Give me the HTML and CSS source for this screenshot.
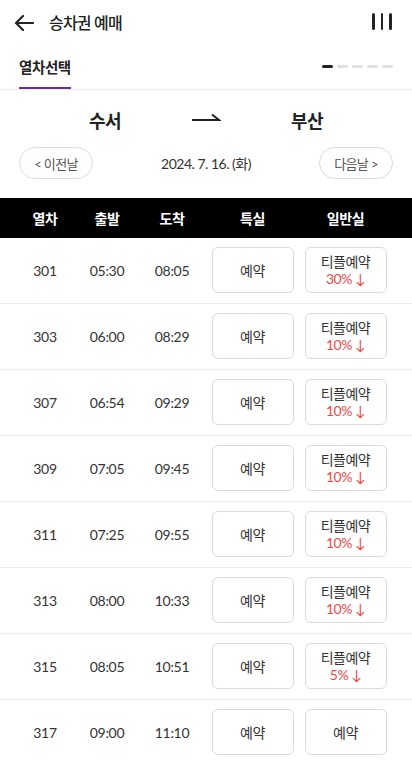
FILE: index.html
```html
<!DOCTYPE html>
<html lang="ko">
<head>
<meta charset="utf-8">
<title>승차권 예매</title>
<link rel="stylesheet" href="styles.css">
</head>
<body>
<header class="topbar">
  <svg class="back" width="20" height="18" viewBox="0 0 20 18" aria-hidden="true">
    <path d="M19 9H2.5M9 2L2 9l7 7" fill="none" stroke="#222" stroke-width="2.2" stroke-linecap="round" stroke-linejoin="round"/>
  </svg>
  <h1 class="title">승차권 예매</h1>
  <div class="menu" aria-hidden="true"><span></span><span></span><span></span></div>
</header>

<nav class="tabs">
  <div class="tab">열차선택</div>
  <div class="steps"><span class="on"></span><span></span><span></span><span></span><span></span></div>
</nav>

<section class="route">
  <div class="station">수서</div>
  <div class="route-arrow">
    <svg width="30" height="10" viewBox="0 0 30 10" aria-hidden="true">
      <path d="M1 8H28L21 2.5" fill="none" stroke="#222" stroke-width="2" stroke-linejoin="miter"/>
    </svg>
  </div>
  <div class="station">부산</div>
</section>

<section class="dates">
  <button class="pill">&lt; 이전날</button>
  <div class="date">2024. 7. 16. (화)</div>
  <button class="pill">다음날 &gt;</button>
</section>

<section class="table">
  <div class="row head">
    <div>열차</div><div>출발</div><div>도착</div><div>특실</div><div>일반실</div>
  </div>
  <div class="row">
    <div>301</div><div>05:30</div><div>08:05</div>
    <div><button class="btn">예약</button></div>
    <div><button class="btn two">티플예약<span class="sale">30% ↓</span></button></div>
  </div>
  <div class="row">
    <div>303</div><div>06:00</div><div>08:29</div>
    <div><button class="btn">예약</button></div>
    <div><button class="btn two">티플예약<span class="sale">10% ↓</span></button></div>
  </div>
  <div class="row">
    <div>307</div><div>06:54</div><div>09:29</div>
    <div><button class="btn">예약</button></div>
    <div><button class="btn two">티플예약<span class="sale">10% ↓</span></button></div>
  </div>
  <div class="row">
    <div>309</div><div>07:05</div><div>09:45</div>
    <div><button class="btn">예약</button></div>
    <div><button class="btn two">티플예약<span class="sale">10% ↓</span></button></div>
  </div>
  <div class="row">
    <div>311</div><div>07:25</div><div>09:55</div>
    <div><button class="btn">예약</button></div>
    <div><button class="btn two">티플예약<span class="sale">10% ↓</span></button></div>
  </div>
  <div class="row">
    <div>313</div><div>08:00</div><div>10:33</div>
    <div><button class="btn">예약</button></div>
    <div><button class="btn two">티플예약<span class="sale">10% ↓</span></button></div>
  </div>
  <div class="row">
    <div>315</div><div>08:05</div><div>10:51</div>
    <div><button class="btn">예약</button></div>
    <div><button class="btn two">티플예약<span class="sale">5% ↓</span></button></div>
  </div>
  <div class="row">
    <div>317</div><div>09:00</div><div>11:10</div>
    <div><button class="btn">예약</button></div>
    <div><button class="btn">예약</button></div>
  </div>
</section>
</body>
</html>
```

FILE: styles.css
```css
* { box-sizing: border-box; }
html, body { margin: 0; padding: 0; background: #fff; }
body {
  font-family: Lato, "Noto Sans CJK KR", sans-serif;
  color: #222;
  width: 412px;
}

.topbar {
  height: 44px;
  display: flex;
  align-items: center;
  padding: 0 20px 0 14px;
}
.back { display: block; margin-top: 1px; }
.title {
  margin: 0 0 0 15px;
  font-size: 16px;
  font-weight: 500;
  letter-spacing: -0.8px;
  color: #222;
  flex: 1;
}
.menu { display: flex; gap: 6px; margin-top: -2px; }
.menu span {
  width: 2.6px;
  height: 17px;
  background: #222;
  border-radius: 2px;
}

.tabs {
  height: 46px;
  display: flex;
  align-items: flex-end;
  justify-content: space-between;
  padding: 0 19px;
  border-bottom: 1px solid #ececec;
}
.tab {
  height: 45px;
  padding-top: 2px;
  display: flex;
  align-items: center;
  font-size: 14.5px;
  font-weight: 700;
  letter-spacing: -0.4px;
  white-space: nowrap;
  color: #222;
  border-bottom: 2px solid #6b2aa5;
}
.steps {
  display: flex;
  gap: 4px;
  align-self: center;
  margin-top: -1px;
}
.steps span {
  width: 11px;
  height: 3px;
  border-radius: 2px;
  background: #e0e0e0;
}
.steps span.on { background: #222; }

.route {
  display: grid;
  grid-template-columns: 101px 101px 101px;
  justify-content: center;
  align-items: center;
  margin-top: 17px;
  height: 26px;
}
.station {
  text-align: center;
  font-size: 18px;
  font-weight: 700;
  letter-spacing: -0.5px;
  color: #222;
}
.route-arrow { display: flex; justify-content: center; margin-top: -6px; }

.dates {
  display: flex;
  justify-content: space-between;
  align-items: center;
  padding: 0 19px;
  margin-top: 14px;
}
.pill {
  width: 74px;
  height: 32px;
  border: 1px solid #dcdcdc;
  border-radius: 16px;
  background: #fff;
  font-family: inherit;
  font-size: 13px;
  letter-spacing: -0.6px;
  color: #555;
  padding: 0;
}
.date { font-size: 14px; letter-spacing: -0.5px; color: #333; }

.table { margin-top: 19px; }
.row {
  display: grid;
  grid-template-columns: 62px 62px 68px 93px 93px;
  padding-left: 14px;
  align-items: center;
  justify-items: center;
  height: 66px;
  border-bottom: 1px solid #ececec;
  font-size: 14px;
  letter-spacing: -0.3px;
  color: #333;
}
.row.head {
  height: 40px;
  background: #000;
  color: #fff;
  font-weight: 700;
  font-size: 14px;
  border-bottom: 0;
}
.row > div { text-align: center; }
.btn {
  width: 82px;
  height: 46px;
  margin-top: -1px;
  border: 1px solid #d9dbe3;
  border-radius: 6px;
  background: #fff;
  font-family: inherit;
  font-size: 14px;
  letter-spacing: -0.5px;
  color: #333;
  padding: 0;
  display: flex;
  flex-direction: column;
  align-items: center;
  justify-content: center;
  line-height: 17px;
}
.sale { color: #f04848; }
```
